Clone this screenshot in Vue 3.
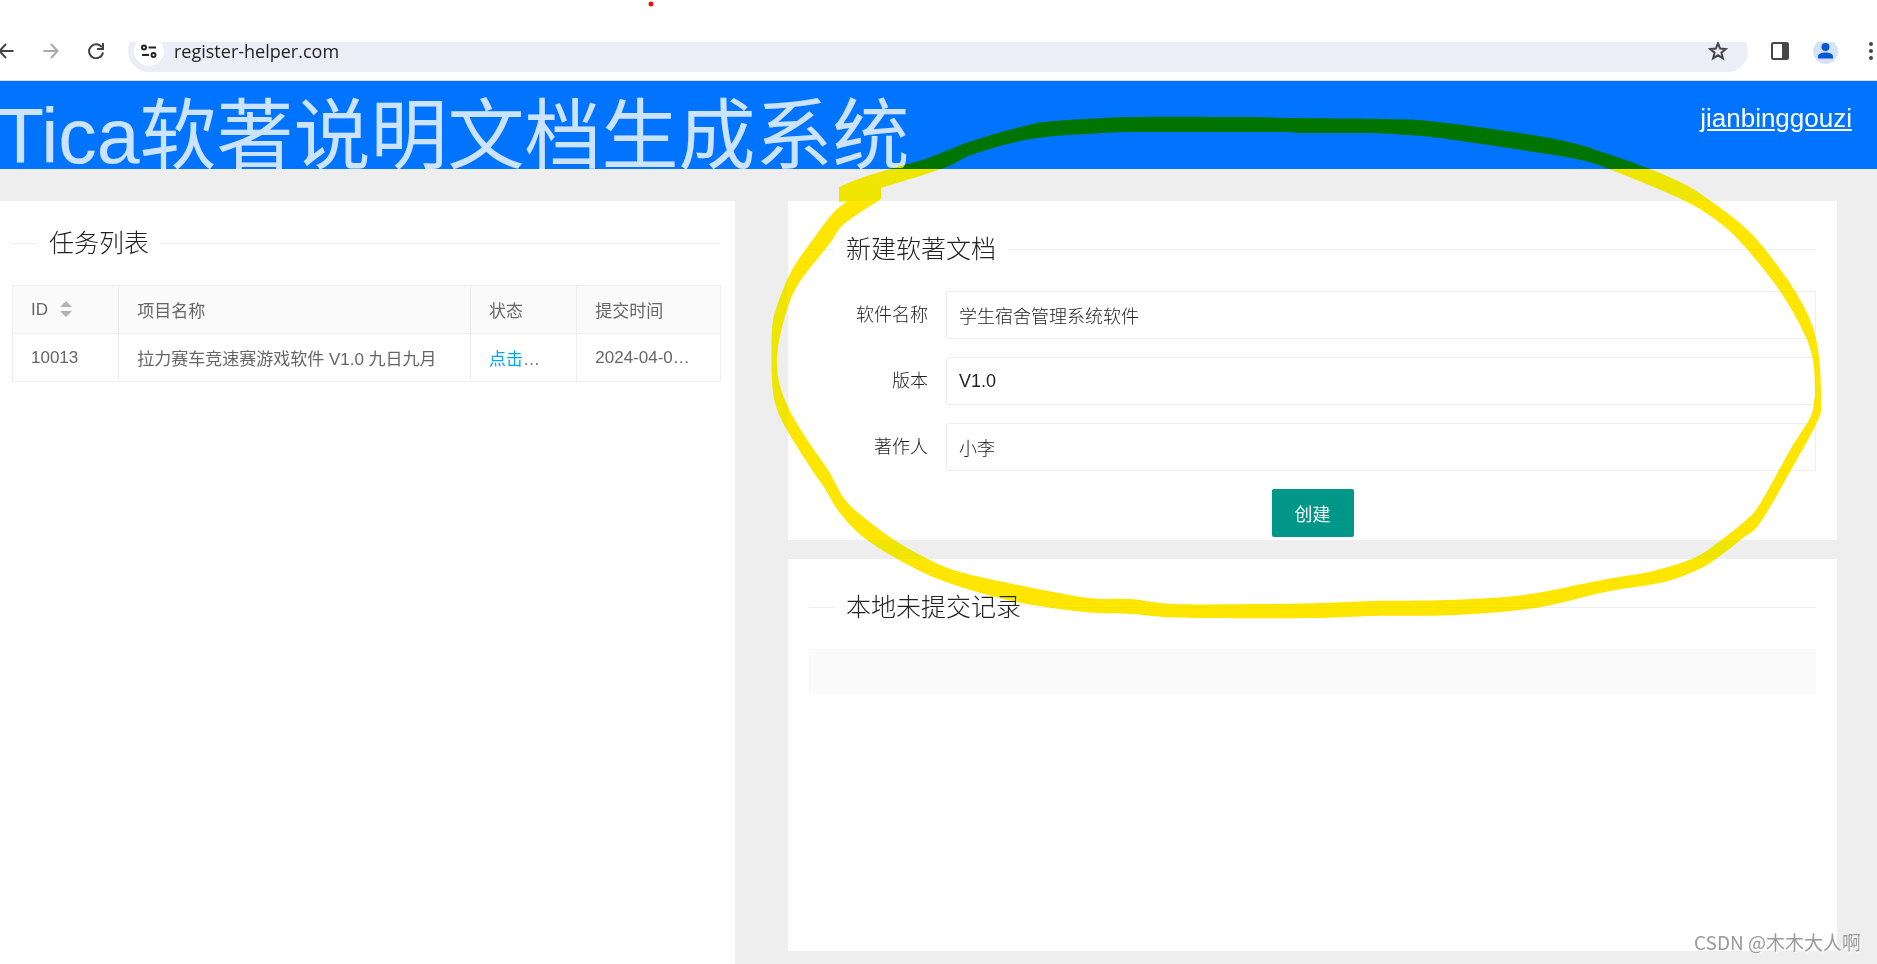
<script setup>
import { ref } from 'vue'

const form = ref({ name: '学生宿舍管理系统软件', version: 'V1.0', author: '小李' })

const fields = [
  { key: 'name', label: '软件名称' },
  { key: 'version', label: '版本' },
  { key: 'author', label: '著作人' },
]

const tasks = [
  { id: '10013', name: '拉力赛车竞速赛游戏软件 V1.0 九日九月', action: '点击', time: '2024-04-0…' },
]

// Both edges of the highlighter stroke, each a closed loop of points.
const outerEdge = [
  [839, 187], [864, 177], [904, 165], [928, 158], [972, 141], [1024, 126], [1055, 121],
  [1131, 117], [1242, 117], [1300, 118], [1385, 119], [1429, 121], [1506, 131], [1565, 141],
  [1605, 153], [1650, 169], [1686, 185], [1712, 202], [1742, 225], [1764, 248], [1795, 291],
  [1812, 325], [1819, 357], [1821, 400], [1818, 420], [1791, 470], [1760, 523], [1743, 538],
  [1716, 559], [1697, 570], [1664, 582], [1605, 592], [1535, 608], [1455, 615], [1374, 616],
  [1315, 618], [1203, 618], [1164, 617], [1131, 614], [1085, 612], [1017, 602], [955, 585],
  [914, 568], [867, 540], [840, 513], [824, 487], [812, 470], [787, 430], [776, 406],
  [772, 380], [772, 330], [777, 306], [792, 270], [814, 238], [833, 213], [849, 200],
]
const innerEdge = [
  [881, 199], [878, 201], [844, 224], [830, 243], [799, 283], [787, 310], [778, 347],
  [778, 377], [788, 407], [806, 438], [828, 470], [846, 501], [871, 523], [896, 541],
  [926, 558], [960, 572], [1028, 587], [1089, 598], [1131, 599], [1174, 604], [1260, 604],
  [1322, 603], [1374, 601], [1447, 600], [1524, 595], [1602, 580], [1653, 571], [1694, 558],
  [1720, 541], [1745, 521], [1758, 507], [1779, 470], [1793, 445], [1810, 418], [1814, 402],
  [1815, 390], [1813, 360], [1804, 333], [1780, 291], [1746, 248], [1720, 223], [1683, 200],
  [1609, 169], [1576, 159], [1528, 151], [1447, 139], [1407, 135], [1366, 133], [1300, 133],
  [1278, 132], [1153, 132], [1103, 133], [1031, 139], [974, 154], [944, 168], [881, 188],
]

// Catmull-Rom spline through the points, as cubic Béziers.
function smooth(points) {
  let d = `M${points[0]}`
  for (let i = 0; i < points.length - 1; i++) {
    const a = points[Math.max(i - 1, 0)]
    const b = points[i]
    const c = points[i + 1]
    const e = points[Math.min(i + 2, points.length - 1)]
    d += `C${b[0] + (c[0] - a[0]) / 6},${b[1] + (c[1] - a[1]) / 6} ${c[0] - (e[0] - b[0]) / 6},${c[1] - (e[1] - b[1]) / 6} ${c}`
  }
  return d + 'Z'
}
const ring = smooth(outerEdge) + smooth(innerEdge)
</script>

<template>
  <div class="page">
    <div class="strip"></div>
    <div class="toolbar">
      <div class="toolbar-row">
        <button class="nav back" type="button" aria-label="Back">
          <svg viewBox="0 0 16 16"><path d="M15.500 8H1.500M8 1L1.500 8L8 15" /></svg>
        </button>
        <button class="nav forward" type="button" aria-label="Forward">
          <svg viewBox="0 0 16 16"><path d="M.5 8H14.500M8 1L14.500 8L8 15" /></svg>
        </button>
        <button class="nav reload" type="button" aria-label="Reload">
          <svg viewBox="0 0 16 16"><path d="M13.800 4.200A7 7 0 1 0 15 9.500M15 0V6H9" /></svg>
        </button>
        <div class="address">
          <button class="site" type="button" aria-label="Site information">
            <svg viewBox="0 0 16 14"><circle cx="3" cy="3.500" r="2" /><path d="M7.500 3.500H15M1 11H8" /><circle cx="12.500" cy="11" r="2" /></svg>
          </button>
          <span class="url">register-helper.com</span>
          <button class="star" type="button" aria-label="Bookmark">
            <svg viewBox="0 0 20 20"><path d="M10 2.200L12.100 7.600L17.900 8L13.400 11.700L14.900 17.400L10 14.300L5.100 17.400L6.600 11.700L2.100 8L7.900 7.600Z" /></svg>
          </button>
        </div>
        <button class="side" type="button" aria-label="Side panel">
          <svg viewBox="0 0 18 18"><rect x="1" y="1" width="16" height="16" rx="1.500" fill="none" stroke="#474747" stroke-width="2" /><path d="M11 1H17V17H11Z" fill="#474747" /></svg>
        </button>
        <button class="profile" type="button" aria-label="Profile">
          <svg viewBox="0 0 25 25"><circle cx="12.500" cy="12.500" r="12.500" fill="#d3e3fd" /><circle cx="12.500" cy="8" r="4" fill="#0b57d0" /><path d="M5 19.500V17.500C5 14.500 9 13.500 12.500 13.500S20 14.500 20 17.500V19.500Z" fill="#0b57d0" /></svg>
        </button>
        <button class="more" type="button" aria-label="Menu">
          <svg viewBox="0 0 4 18"><circle cx="2" cy="2" r="2" /><circle cx="2" cy="9" r="2" /><circle cx="2" cy="16" r="2" /></svg>
        </button>
      </div>
    </div>

    <header class="header">
      <h1>Tica软著说明文档生成系统</h1>
      <a href="#user">jianbinggouzi</a>
    </header>

    <main class="main">
      <section class="panel tasks">
        <h2>任务列表</h2>
        <table>
          <colgroup><col class="c-id" /><col /><col class="c-state" /><col class="c-time" /></colgroup>
          <thead>
            <tr>
              <th>ID<svg class="sort" viewBox="0 0 12 16"><path d="M6 0L12 6H0ZM0 10H12L6 16Z" /></svg></th>
              <th>项目名称</th>
              <th>状态</th>
              <th>提交时间</th>
            </tr>
          </thead>
          <tbody>
            <tr v-for="task in tasks" :key="task.id">
              <td>{{ task.id }}</td>
              <td>{{ task.name }}</td>
              <td><a href="#task">{{ task.action }}</a>…</td>
              <td>{{ task.time }}</td>
            </tr>
          </tbody>
        </table>
      </section>

      <div class="column">
        <section class="panel create">
          <h2>新建软著文档</h2>
          <form @submit.prevent>
            <div v-for="f in fields" :key="f.key" class="row">
              <label :for="f.key">{{ f.label }}</label>
              <input :id="f.key" v-model="form[f.key]" type="text" />
            </div>
            <button class="submit" type="submit">创建</button>
          </form>
        </section>
        <section class="panel local">
          <h2>本地未提交记录</h2>
          <div class="empty-head"></div>
        </section>
      </div>
    </main>

    <svg class="marker" viewBox="0 0 1877 964" aria-hidden="true">
      <path :d="ring" fill="#ffe600" fill-rule="evenodd" />
      <path d="M839 187L881 180V199L849 201L839 202Z" fill="#ffe600" />
      <circle cx="651" cy="4" r="2.500" fill="#ea1313" />
    </svg>
    <div class="watermark">CSDN @木木大人啊</div>
  </div>
</template>

<style>
body { margin: 0; background: #eee; }
</style>

<style scoped>
.page {
  position: relative;
  display: flex;
  flex-direction: column;
  min-height: 100vh;
  overflow: hidden;
  background: #eee;
  color: #222;
  font-family: "Liberation Sans", "Noto Sans CJK SC", sans-serif;
  font-size: 18px;
}
* { box-sizing: border-box; }
h1, h2 { margin: 0; }
button { padding: 0; border: 0; background: none; }
svg { display: block; }

.strip { height: 42px; background: #fff; }
.toolbar {
  display: flex;
  align-items: flex-end;
  height: 39px;
  overflow: hidden;
  background: #fff;
  border-bottom: 1px solid #d5dff0;
}
.toolbar-row {
  display: flex;
  flex: 1;
  align-items: center;
  height: 42px;
  margin-bottom: 8px;
}
.nav { flex: none; width: 16px; margin-right: 29px; }
.nav svg { width: 16px; height: 16px; fill: none; stroke: #444; stroke-width: 2; }
.back { margin-left: -2px; }
.forward svg { stroke: #aaa; }
.reload { margin-right: 24px; }
.address {
  display: flex;
  flex: 1;
  align-items: center;
  height: 42px;
  padding: 0 20px 0 6px;
  border-radius: 21px;
  background: #ebeef7;
}
.site {
  display: flex;
  align-items: center;
  justify-content: center;
  width: 30px;
  height: 30px;
  border-radius: 50%;
  background: #fff;
}
.site svg { width: 16px; height: 14px; fill: none; stroke: #222; stroke-width: 2; }
.url { flex: 1; margin-left: 10px; font-family: "Open Sans", sans-serif; font-size: 18px; line-height: 18px; }
.star svg { width: 20px; height: 20px; fill: none; stroke: #444; stroke-width: 2; }
.side { margin-left: 23px; }
.side svg { width: 18px; height: 18px; }
.profile { margin-left: 24px; }
.profile svg { width: 25px; height: 25px; }
.more { margin: 0 4px 0 31px; }
.more svg { width: 4px; height: 18px; fill: #444; }

.header {
  position: relative;
  display: flex;
  justify-content: space-between;
  height: 88px;
  background: #0074ff;
}
.header h1 {
  margin-left: -3px;
  color: rgba(255, 255, 255, .8);
  font-size: 77px;
  font-weight: 400;
  line-height: 110px;
  white-space: nowrap;
}
.header a { margin-right: 25px; color: #fff; font-size: 26px; line-height: 74px; }

.main {
  display: grid;
  flex: 1;
  grid-template-columns: 735fr 1049fr;
  gap: 53px;
  padding: 32px 40px 0 0;
}
.panel { background: #fff; }
.column { display: flex; flex-direction: column; gap: 19px; padding-bottom: 13px; }
.tasks { padding: 26px 14px 0 12px; }
.create { padding: 32px 21px 3px; }
.local { flex: 1; padding: 32px 21px 0; }

h2 {
  display: flex;
  align-items: center;
  gap: 12px;
  margin-bottom: 26px;
  font-size: 25px;
  font-weight: 300;
  line-height: 32px;
}
h2::before, h2::after { content: ""; width: 25px; height: 1px; background: #eee; }
h2::after { flex: 1; }

table {
  width: 100%;
  border-collapse: collapse;
  table-layout: fixed;
  color: #666;
  font-size: 17px;
}
.c-id, .c-state { width: 15%; }
.c-time { width: 20.3%; }
th, td {
  height: 48px;
  padding: 0 18px;
  border: 1px solid #eee;
  font-weight: 400;
  text-align: left;
  white-space: nowrap;
}
th { background: #fafafa; }
td a { color: #01aaed; text-decoration: none; }
.sort { display: inline-block; width: 12px; height: 16px; margin-left: 12px; fill: #b2b2b2; vertical-align: -2px; }

form { display: flex; flex-direction: column; gap: 18px; font-weight: 300; }
.row { display: flex; align-items: center; }
.row label { flex: none; width: 137px; padding-right: 18px; line-height: 24px; text-align: right; }
.row input {
  flex: 1;
  min-width: 0;
  height: 48px;
  padding: 0 12px;
  border: 1px solid #eee;
  border-radius: 2px;
  background: #fff;
  color: #222;
  font: inherit;
}
.submit {
  align-self: center;
  height: 48px;
  padding: 0 23px;
  border-radius: 2px;
  background: #009688;
  color: #fff;
  font: inherit;
  font-weight: 400;
}
.empty-head { height: 45px; background: #fafafa; }

.marker {
  position: absolute;
  top: 0;
  left: 0;
  width: 100%;
  mix-blend-mode: darken;
  pointer-events: none;
}
.watermark {
  position: absolute;
  right: 16px;
  bottom: 8px;
  color: #999;
  font-family: "Noto Sans CJK SC", sans-serif;
  font-size: 19px;
  line-height: 28px;
  text-shadow: 1px 1px 0 #fff;
}
</style>
